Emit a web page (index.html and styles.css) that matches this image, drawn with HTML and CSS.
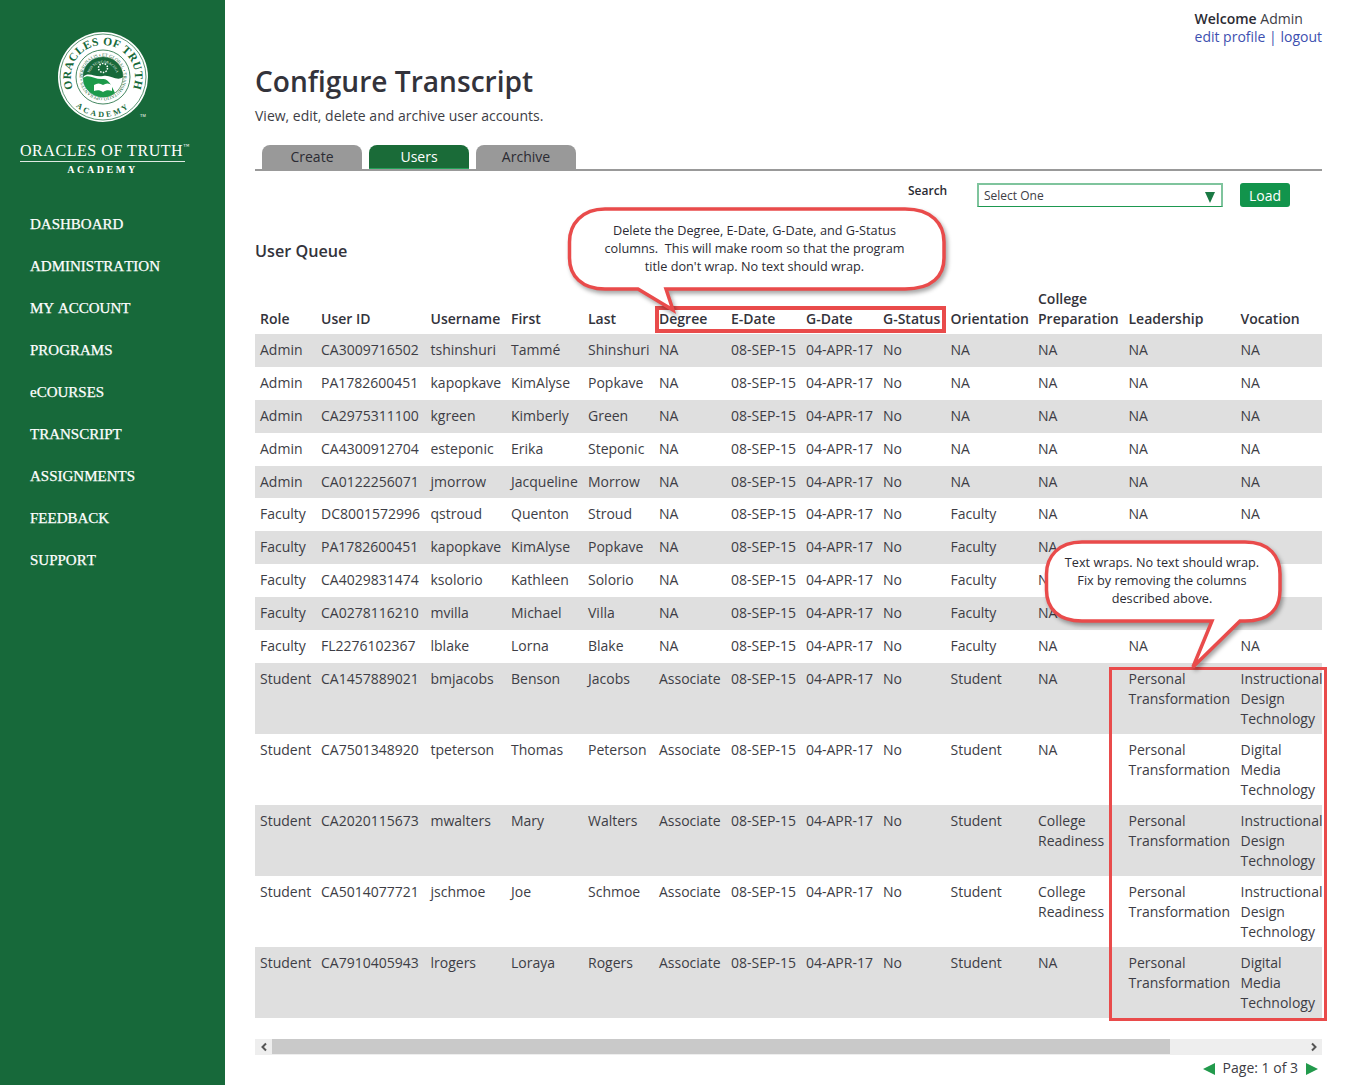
FILE: index.html
```html
<!DOCTYPE html>
<html lang="en">
<head>
  <meta charset="UTF-8" />
  <title>Configure Transcript</title>
  <link rel="stylesheet" href="styles.css">
</head>
<body>

<div class="sidebar">
  <svg class="seal" width="100" height="100" viewBox="0 0 100 100">
    <defs>
      <path id="sealOuter" d="M46 78a32 32 0 1 1 .01 0z"/>
      <path id="sealBottom" d="M46 6a40 40 0 1 0 .01 0z"/>
      <path id="sealRing" d="M46 66.500a20.500 20.500 0 1 1 .01 0z"/>
      <path id="sealInner" d="M46 60a14 14 0 1 1 .01 0z"/>
    </defs>
    <circle cx="46" cy="46" r="45" fill="#fff"/>
    <circle cx="46" cy="46" r="43" fill="none" stroke="#17693a" stroke-width=".7"/>
    <circle cx="46" cy="46" r="27" fill="#fff" stroke="#17693a" stroke-width=".8"/>
    <circle cx="46" cy="46" r="20" fill="#fff" stroke="#17693a" stroke-width=".6"/>
    <path d="M26 46A20 20 0 0 1 66 46C60 51 53 43 46 45C38 47 32 40 26 46Z" fill="#17693a"/>
    <path d="M26 47C32 42 38 49 46 48C52 47 56 58 58 62A20 20 0 0 1 26 47Z" fill="#1c9a4a"/>
    <circle cx="46" cy="37" r="4.500" fill="none" stroke="#fff" stroke-width="1.500" stroke-dasharray="1.500 1.300"/>
    <path d="M37 54c3-2 6-2 9 0 3-2 6-2 9 0v6c-3-1-6-1-9 1-3-2-6-2-9-1z" fill="#fff"/>
    <text class="seal-big"><textPath href="#sealOuter" startOffset="50%" text-anchor="middle">ORACLES OF TRUTH</textPath></text>
    <text class="seal-acad"><textPath href="#sealBottom" startOffset="50%" text-anchor="middle">ACADEMY</textPath></text>
    <text class="seal-small"><textPath href="#sealRing" startOffset="50%" text-anchor="middle">OPERANTES • PERSONALIS • ET GLOBAL • TRANSMUTATIO</textPath></text>
    <text class="seal-tiny"><textPath href="#sealInner" startOffset="50%" text-anchor="middle">NOS SUNT ORACULA</textPath></text>
    <text class="seal-tm" x="83" y="86">TM</text>
  </svg>
  <div class="brand">ORACLES OF TRUTH<sup>™</sup></div>
  <div class="brand-sub">ACADEMY</div>
  <ul class="nav">
    <li>DASHBOARD</li>
    <li>ADMINISTRATION</li>
    <li>MY ACCOUNT</li>
    <li>PROGRAMS</li>
    <li>eCOURSES</li>
    <li>TRANSCRIPT</li>
    <li>ASSIGNMENTS</li>
    <li>FEEDBACK</li>
    <li>SUPPORT</li>
  </ul>
</div>

<div class="main">
  <div class="welcome">
    <div><b>Welcome</b> Admin</div>
    <div><a href="#">edit profile</a> <a href="#">|</a> <a href="#">logout</a></div>
  </div>

  <h1>Configure Transcript</h1>
  <p class="intro">View, edit, delete and archive user accounts.</p>

  <div class="tabs">
    <div class="tab">Create</div>
    <div class="tab active">Users</div>
    <div class="tab">Archive</div>
  </div>

  <div class="search-row">
    <b class="search-label">Search</b>
    <div class="select">Select One<span class="select-arrow"></span></div>
    <button class="load">Load</button>
  </div>

  <h3>User Queue</h3>

  <table>
    <colgroup>
      <col class="c1"><col class="c2"><col class="c3"><col class="c4"><col class="c5"><col class="c6"><col class="c7">
      <col class="c8"><col class="c9"><col class="c10"><col class="c11"><col class="c12"><col class="c13">
    </colgroup>
    <thead>
      <tr><th>Role</th><th>User ID</th><th>Username</th><th>First</th><th>Last</th><th>Degree</th><th>E-Date</th><th>G-Date</th><th>G-Status</th><th>Orientation</th><th>College<br>Preparation</th><th>Leadership</th><th>Vocation</th></tr>
    </thead>
    <tbody>
      <tr><td>Admin</td><td>CA3009716502</td><td>tshinshuri</td><td>Tammé</td><td>Shinshuri</td><td>NA</td><td>08-SEP-15</td><td>04-APR-17</td><td>No</td><td>NA</td><td>NA</td><td>NA</td><td>NA</td></tr>
      <tr><td>Admin</td><td>PA1782600451</td><td>kapopkave</td><td>KimAlyse</td><td>Popkave</td><td>NA</td><td>08-SEP-15</td><td>04-APR-17</td><td>No</td><td>NA</td><td>NA</td><td>NA</td><td>NA</td></tr>
      <tr><td>Admin</td><td>CA2975311100</td><td>kgreen</td><td>Kimberly</td><td>Green</td><td>NA</td><td>08-SEP-15</td><td>04-APR-17</td><td>No</td><td>NA</td><td>NA</td><td>NA</td><td>NA</td></tr>
      <tr><td>Admin</td><td>CA4300912704</td><td>esteponic</td><td>Erika</td><td>Steponic</td><td>NA</td><td>08-SEP-15</td><td>04-APR-17</td><td>No</td><td>NA</td><td>NA</td><td>NA</td><td>NA</td></tr>
      <tr><td>Admin</td><td>CA0122256071</td><td>jmorrow</td><td>Jacqueline</td><td>Morrow</td><td>NA</td><td>08-SEP-15</td><td>04-APR-17</td><td>No</td><td>NA</td><td>NA</td><td>NA</td><td>NA</td></tr>
      <tr><td>Faculty</td><td>DC8001572996</td><td>qstroud</td><td>Quenton</td><td>Stroud</td><td>NA</td><td>08-SEP-15</td><td>04-APR-17</td><td>No</td><td>Faculty</td><td>NA</td><td>NA</td><td>NA</td></tr>
      <tr><td>Faculty</td><td>PA1782600451</td><td>kapopkave</td><td>KimAlyse</td><td>Popkave</td><td>NA</td><td>08-SEP-15</td><td>04-APR-17</td><td>No</td><td>Faculty</td><td>NA</td><td>NA</td><td>NA</td></tr>
      <tr><td>Faculty</td><td>CA4029831474</td><td>ksolorio</td><td>Kathleen</td><td>Solorio</td><td>NA</td><td>08-SEP-15</td><td>04-APR-17</td><td>No</td><td>Faculty</td><td>NA</td><td>NA</td><td>NA</td></tr>
      <tr><td>Faculty</td><td>CA0278116210</td><td>mvilla</td><td>Michael</td><td>Villa</td><td>NA</td><td>08-SEP-15</td><td>04-APR-17</td><td>No</td><td>Faculty</td><td>NA</td><td>NA</td><td>NA</td></tr>
      <tr><td>Faculty</td><td>FL2276102367</td><td>lblake</td><td>Lorna</td><td>Blake</td><td>NA</td><td>08-SEP-15</td><td>04-APR-17</td><td>No</td><td>Faculty</td><td>NA</td><td>NA</td><td>NA</td></tr>
      <tr><td>Student</td><td>CA1457889021</td><td>bmjacobs</td><td>Benson</td><td>Jacobs</td><td>Associate</td><td>08-SEP-15</td><td>04-APR-17</td><td>No</td><td>Student</td><td>NA</td><td>Personal<br>Transformation</td><td>Instructional<br>Design<br>Technology</td></tr>
      <tr><td>Student</td><td>CA7501348920</td><td>tpeterson</td><td>Thomas</td><td>Peterson</td><td>Associate</td><td>08-SEP-15</td><td>04-APR-17</td><td>No</td><td>Student</td><td>NA</td><td>Personal<br>Transformation</td><td>Digital<br>Media<br>Technology</td></tr>
      <tr><td>Student</td><td>CA2020115673</td><td>mwalters</td><td>Mary</td><td>Walters</td><td>Associate</td><td>08-SEP-15</td><td>04-APR-17</td><td>No</td><td>Student</td><td>College<br>Readiness</td><td>Personal<br>Transformation</td><td>Instructional<br>Design<br>Technology</td></tr>
      <tr><td>Student</td><td>CA5014077721</td><td>jschmoe</td><td>Joe</td><td>Schmoe</td><td>Associate</td><td>08-SEP-15</td><td>04-APR-17</td><td>No</td><td>Student</td><td>College<br>Readiness</td><td>Personal<br>Transformation</td><td>Instructional<br>Design<br>Technology</td></tr>
      <tr><td>Student</td><td>CA7910405943</td><td>lrogers</td><td>Loraya</td><td>Rogers</td><td>Associate</td><td>08-SEP-15</td><td>04-APR-17</td><td>No</td><td>Student</td><td>NA</td><td>Personal<br>Transformation</td><td>Digital<br>Media<br>Technology</td></tr>
    </tbody>
  </table>

  <div class="scrollbar">
    <span class="scroll-btn"><svg width="8" height="10" viewBox="0 0 8 10"><path d="M6 1.500L2.500 5L6 8.500" fill="none" stroke="#555" stroke-width="2"/></svg></span>
    <div class="scroll-thumb"></div>
    <span class="scroll-btn"><svg width="8" height="10" viewBox="0 0 8 10"><path d="M2 1.500L5.500 5L2 8.500" fill="none" stroke="#555" stroke-width="2"/></svg></span>
  </div>

  <div class="pager">
    <span class="arrow-left"></span>
    <span>Page: 1 of 3</span>
    <span class="arrow-right"></span>
  </div>
</div>

<!-- review markup sitting on top of the page -->
<div class="mark mark-cols"></div>
<div class="mark mark-wrap"></div>

<svg class="bubble bubble-top" width="400" height="120" viewBox="560 200 400 120">
  <path d="M605 209H905C932 209 944 224 944 242V258C944 276 932 289 905 289H666L673 310L638 289H605C582 289 569.500 276 569.500 258V242C569.500 224 582 209 605 209Z" fill="#fff" stroke="#e94b4b" stroke-width="3.500"/>
</svg>
<div class="bubble-text bubble-text-top">Delete the Degree, E-Date, G-Date, and G-Status<br>columns.&nbsp; This will make room so that the program<br>title don't wrap. No text should wrap.</div>

<svg class="bubble bubble-side" width="250" height="140" viewBox="1040 535 250 140">
  <path d="M1082 542H1245C1270 542 1280 557 1280 574V590C1280 608 1270 621 1245 621H1240L1193 667L1212 621H1082C1058 621 1046.500 608 1046.500 590V574C1046.500 557 1058 542 1082 542Z" fill="#fff" stroke="#e94b4b" stroke-width="3.500"/>
</svg>
<div class="bubble-text bubble-text-side">Text wraps. No text should wrap.<br>Fix by removing the columns<br>described above.</div>

</body>
</html>
```

FILE: styles.css
```css
html, body {
  margin: 0;
  height: 1085px;
  overflow: hidden;
}
body {
  font-family: "Open Sans", Arial, sans-serif;
  font-size: 14px;
  color: #3d3d45;
  background: #fff;
  display: flex;
  position: relative;
}
a {
  color: #3d50b0;
  text-decoration: none;
}

/* sidebar */
.sidebar {
  width: 225px;
  height: 1085px;
  flex-shrink: 0;
  background-color: #17693a;
  color: #fff;
  text-align: center;
}
.seal {
  display: block;
  margin: 31px 0 -8px 57px;
}
.seal-big {
  font-family: "Liberation Serif", serif;
  font-size: 11.5px;
  font-weight: bold;
  letter-spacing: .4px;
  fill: #17693a;
}
.seal-acad {
  font-family: "Liberation Serif", serif;
  font-size: 8px;
  font-weight: bold;
  letter-spacing: 2.5px;
  fill: #17693a;
}
.seal-small {
  font-family: "Liberation Serif", serif;
  font-size: 4.6px;
  fill: #17693a;
}
.seal-tiny {
  font-family: "Liberation Serif", serif;
  font-size: 3.6px;
  fill: #fff;
}
.seal-tm {
  font-family: "Liberation Sans", sans-serif;
  font-size: 4px;
  fill: #fff;
}
.brand {
  font-family: "Liberation Serif", serif;
  font-size: 16px;
  letter-spacing: .55px;
  line-height: 20px;
  width: 165px;
  margin: 18px 0 0 20px;
  border-bottom: 1px solid #dfe9e2;
  white-space: nowrap;
  text-align: left;
}
.brand sup {
  font-size: 6px;
  vertical-align: 8px;
  line-height: 0;
}
.brand-sub {
  font-family: "Liberation Serif", serif;
  font-weight: bold;
  font-size: 10px;
  letter-spacing: 2.6px;
  line-height: 12px;
  margin-top: 2px;
  width: 205px;
}
.nav {
  list-style: none;
  margin: 27px 0 0;
  padding: 0 0 0 30px;
  text-align: left;
  font-family: "Liberation Serif", serif;
  font-size: 15px;
  font-kerning: none;
  line-height: 42px;
  -webkit-text-stroke: .25px #fff;
}

/* main column */
.main {
  width: 1067px;
  margin-left: 30px;
  position: relative;
}
.welcome {
  position: absolute;
  right: 0;
  top: 10px;
  line-height: 18px;
  font-size: 14px;
}
.welcome b {
  font-weight: 600;
  color: #2b2b33;
}
h1 {
  margin: 0;
  padding-top: 61px;
  font-size: 28.1px;
  font-weight: 600;
  line-height: 40px;
  color: #33333b;
}
.intro {
  margin: 5px 0 0;
  line-height: 20px;
}
.tabs {
  display: flex;
  gap: 7px;
  margin-top: 19px;
  padding-left: 7px;
  border-bottom: 2px solid #999;
}
.tab {
  width: 100px;
  height: 24px;
  line-height: 23px;
  text-align: center;
  background: #999;
  border-radius: 8px 8px 0 0;
  color: #2b2b33;
}
.tab.active {
  background: #1a6b38;
  color: #fff;
  box-shadow: inset 0 -1px #24a35a;
}
.search-row {
  display: flex;
  align-items: flex-start;
  margin-top: 12px;
  height: 26px;
}
.search-label {
  margin-left: 653px;
  width: 69px;
  font-size: 12px;
  font-weight: 600;
  line-height: 16px;
  color: #2b2b33;
}
.select {
  position: relative;
  box-sizing: border-box;
  width: 246px;
  height: 24px;
  padding-left: 5px;
  font-size: 12px;
  line-height: 21px;
  border: 2px solid #7fc49d;
  border-bottom-color: #1d9850;
  border-bottom-width: 1px;
}
.select-arrow {
  position: absolute;
  right: 6px;
  top: 7px;
  border-left: 5px solid transparent;
  border-right: 5px solid transparent;
  border-top: 11px solid #1a7a44;
}
.load {
  width: 50px;
  height: 24px;
  margin-left: 17px;
  padding: 0;
  border: none;
  border-radius: 3px;
  background: #12944c;
  color: #fff;
  font-family: inherit;
  font-size: 14px;
}
h3 {
  margin: 30px 0 0;
  font-size: 16.2px;
  font-weight: 600;
  line-height: 24px;
  color: #33333b;
}

/* table */
table {
  width: 1067px;
  table-layout: fixed;
  border-collapse: collapse;
  margin-top: 26px;
}
.c1 { width: 61px; }
.c2 { width: 109.5px; }
.c3 { width: 80.5px; }
.c4 { width: 77px; }
.c5 { width: 71px; }
.c6 { width: 72px; }
.c7 { width: 75px; }
.c8 { width: 77px; }
.c9 { width: 67.5px; }
.c10 { width: 87.5px; }
.c11 { width: 90.5px; }
.c12 { width: 112px; }
.c13 { width: 86.5px; }
th {
  padding: 0 0 5px 5px;
  text-align: left;
  vertical-align: bottom;
  font-weight: 600;
  line-height: 20px;
  color: #33333b;
  white-space: nowrap;
}
tbody tr {
  height: 32.9px;
}
td {
  padding: 6px 0 5px 5px;
  vertical-align: top;
  line-height: 20px;
  white-space: nowrap;
  overflow: visible;
}
tbody tr:nth-child(odd) {
  background: #dfdfdf;
}
.scrollbar {
  display: flex;
  height: 16px;
  margin-top: 21px;
  background: #eee;
}
.scroll-btn {
  width: 17px;
  height: 16px;
  display: flex;
  align-items: center;
  justify-content: center;
}
.scroll-thumb {
  width: 898px;
  height: 15px;
  margin-right: 135px;
  background: #c9c9c9;
}
.pager {
  display: flex;
  align-items: center;
  justify-content: flex-end;
  gap: 8px;
  margin-top: 3px;
  padding-right: 4px;
  line-height: 20px;
}
.arrow-left, .arrow-right {
  margin-top: 3px;
  border-top: 6px solid transparent;
  border-bottom: 6px solid transparent;
}
.arrow-left { border-right: 12px solid #229a4c; }
.arrow-right { border-left: 12px solid #229a4c; }

/* review annotations */
.mark {
  position: absolute;
  box-sizing: border-box;
  border: 3px solid #e94b4b;
}
.mark-cols {
  left: 655px;
  top: 306px;
  width: 291px;
  height: 27px;
  border-width: 4px;
}
.mark-wrap {
  left: 1109px;
  top: 667px;
  width: 218px;
  height: 354px;
}
.bubble {
  position: absolute;
  filter: drop-shadow(2px 3px 2px rgba(0,0,0,.35));
}
.bubble-top {
  left: 560px;
  top: 200px;
}
.bubble-side {
  left: 1040px;
  top: 535px;
}
.bubble-text {
  position: absolute;
  font-size: 12.7px;
  line-height: 18px;
  text-align: center;
  color: #2b2b33;
  white-space: nowrap;
}
.bubble-text-top {
  left: 570px;
  width: 369px;
  top: 221px;
}
.bubble-text-side {
  left: 1044px;
  width: 236px;
  top: 553px;
}
```
